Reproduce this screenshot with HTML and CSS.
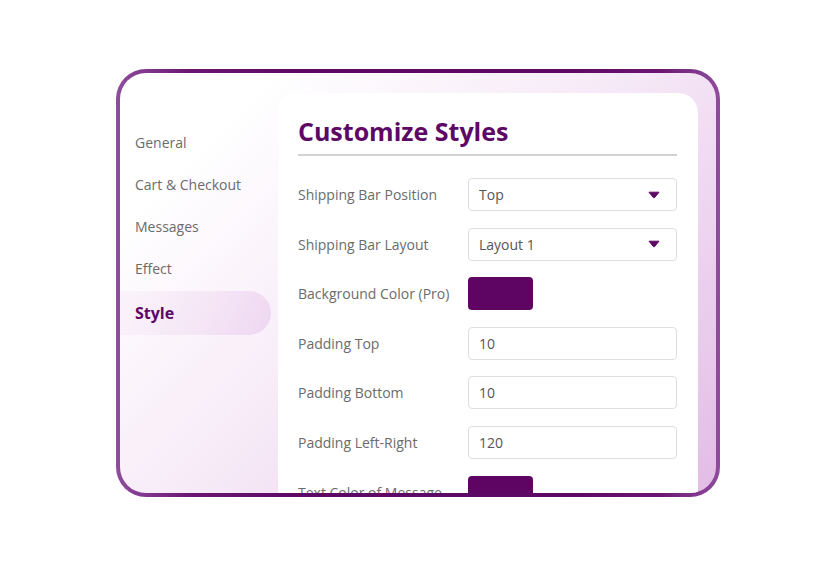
FILE: index.html
```html
<!DOCTYPE html>
<html>
<head>
<meta charset="utf-8">
<link rel="stylesheet" href="styles.css">
</head>
<body>
<div class="page">
  <div class="frame">
    <nav class="sidebar">
      <div class="nav-item">General</div>
      <div class="nav-item">Cart &amp; Checkout</div>
      <div class="nav-item">Messages</div>
      <div class="nav-item">Effect</div>
      <div class="nav-item active">Style</div>
    </nav>
    <section class="card">
      <h1 class="title">Customize Styles</h1>
      <div class="rows">
        <div class="row">
          <span class="label">Shipping Bar Position</span>
          <div class="field select"><span>Top</span><svg class="caret" width="12" height="8" viewBox="0 0 12 8"><path d="M1 1.2 H11 L6.6 6.6 Q6 7.2 5.4 6.6 Z" fill="#5e0866" stroke="#5e0866" stroke-width="1" stroke-linejoin="round"/></svg></div>
        </div>
        <div class="row">
          <span class="label">Shipping Bar Layout</span>
          <div class="field select"><span>Layout 1</span><svg class="caret" width="12" height="8" viewBox="0 0 12 8"><path d="M1 1.2 H11 L6.6 6.6 Q6 7.2 5.4 6.6 Z" fill="#5e0866" stroke="#5e0866" stroke-width="1" stroke-linejoin="round"/></svg></div>
        </div>
        <div class="row">
          <span class="label">Background Color (Pro)</span>
          <div class="swatch"></div>
        </div>
        <div class="row">
          <span class="label">Padding Top</span>
          <div class="field"><span>10</span></div>
        </div>
        <div class="row">
          <span class="label">Padding Bottom</span>
          <div class="field"><span>10</span></div>
        </div>
        <div class="row">
          <span class="label">Padding Left-Right</span>
          <div class="field"><span>120</span></div>
        </div>
        <div class="row">
          <span class="label">Text Color of Message</span>
          <div class="swatch"></div>
        </div>
      </div>
    </section>
  </div>
</div>
</body>
</html>
```

FILE: styles.css
```css
* { box-sizing: border-box; }
html, body { margin: 0; padding: 0; background: #fff; }
body { font-family: "Open Sans", "Liberation Sans", sans-serif; }

.page {
  width: 834px;
  height: 563px;
  padding: 69px 0 0 116px;
}

.frame {
  width: 604px;
  height: 428px;
  border: 4px solid transparent;
  border-radius: 30px;
  background:
    linear-gradient(135deg, #ffffff 15%, #f6e9f7 50%, #e2bce6 100%) padding-box,
    linear-gradient(to right, #8f4d9d 0%, #6a1672 12%, #5e0866 30%, #5e0866 75%, #6a1672 90%, #8f4d9d 100%) border-box;
  display: flex;
  overflow: hidden;
}

.sidebar {
  width: 158px;
  flex: none;
  padding-top: 49px;
  display: flex;
  flex-direction: column;
}

.nav-item {
  height: 42px;
  line-height: 42px;
  padding-left: 15px;
  font-size: 14px;
  color: #6b6b6b;
}

.nav-item.active {
  height: 44px;
  line-height: 44px;
  width: 151px;
  margin-top: 1px;
  font-size: 16px;
  font-weight: 700;
  color: #5e0866;
  border-radius: 0 22px 22px 0;
  background: linear-gradient(120deg, #fbf4fb 0%, #f5e6f6 55%, #eed6f1 100%);
}

.card {
  width: 420px;
  flex: none;
  margin-top: 20px;
  background: #fff;
  border-radius: 16px 20px 0 0;
  padding: 22px 21px 0 20px;
}

.title {
  margin: 0;
  font-size: 25px;
  line-height: 33px;
  font-weight: 700;
  color: #5e0866;
  padding-bottom: 6px;
  border-bottom: 2px solid #d2d2d2;
}

.rows {
  margin-top: 22px;
  display: flex;
  flex-direction: column;
  gap: 16.6px;
}

.row {
  display: flex;
  align-items: center;
  height: 33px;
}

.label {
  width: 170px;
  flex: none;
  font-size: 14px;
  color: #6b6b6b;
}

.field {
  flex: 1;
  height: 33px;
  border: 1px solid #dedede;
  border-radius: 4px;
  padding: 0 16px 0 10px;
  display: flex;
  align-items: center;
  justify-content: space-between;
  font-size: 14px;
  color: #555;
}

.caret { display: block; }

.swatch {
  width: 65px;
  height: 33px;
  border-radius: 4px;
  background: #5e0563;
}
```
